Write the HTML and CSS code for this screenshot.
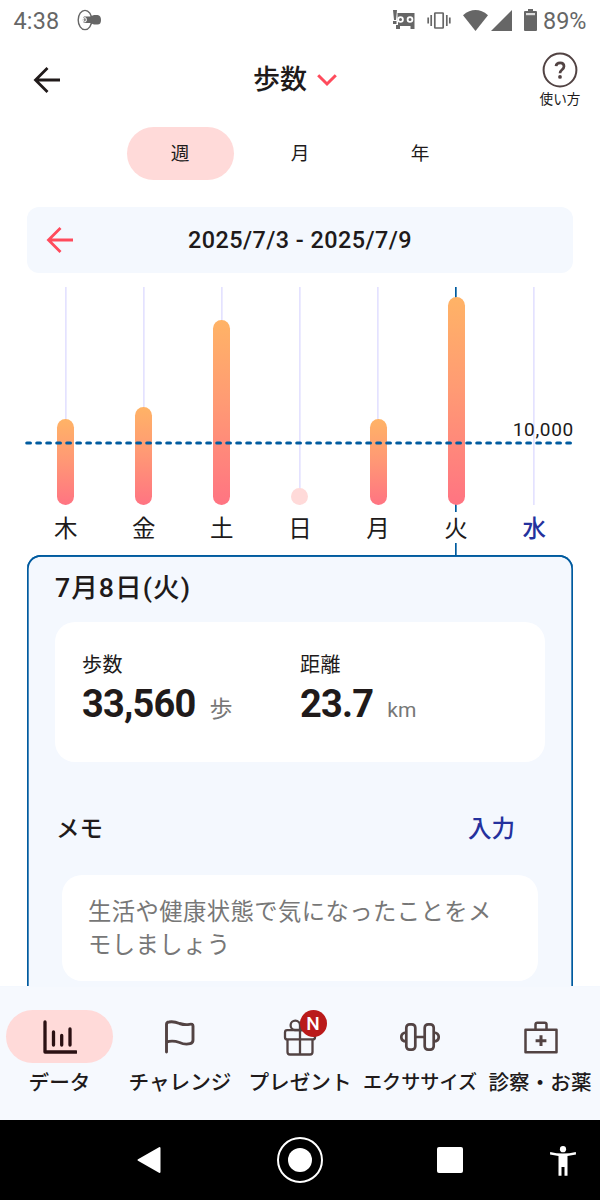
FILE: index.html
```html
<!DOCTYPE html>
<html lang="ja">
<head>
<meta charset="utf-8">
<title>歩数</title>
<link rel="stylesheet" href="styles.css">
</head>
<body>
<div class="status">
  <span class="clock">4:38</span>
  <svg class="st-app" width="24" height="22" viewBox="0 0 24 22"><ellipse cx="8" cy="11" rx="6.8" ry="9.6" fill="none" stroke="#666" stroke-width="1.4"/><path d="M7 7.5H13L17 6H20.5Q24 6.5 24 11T20.5 15.5H17L13 14H7Q4.5 11 7 7.5Z" fill="#666"/><ellipse cx="7.8" cy="10.8" rx="1.6" ry="2.2" fill="#888" stroke="#fff" stroke-width="1"/></svg>
  <div class="st-right">
    <svg class="st-robot" width="22" height="20" viewBox="0 0 22 20"><path fill="#666" d="M0 0H4L3 10H1ZM0 11H3.5V14H0ZM4.5 3H21.5V19H17.5V16H7V19H3V15H5V11H4.5Z"/><circle cx="7.5" cy="9.5" r="2.4" fill="#666" stroke="#fff" stroke-width="1.8"/><circle cx="17" cy="9.5" r="2.4" fill="#666" stroke="#fff" stroke-width="1.8"/></svg>
    <svg class="st-vib" width="24" height="17" viewBox="0 0 24 17"><g fill="none" stroke="#666" stroke-width="1.7"><rect x="7.8" y="1" width="8.4" height="15" rx=".5"/><path d="M4.2 3V14M1.2 5.5V11.5M19.8 3V14M22.8 5.5V11.5"/></g></svg>
    <svg class="st-wifi" width="25" height="21" viewBox="0 0 25 21"><path fill="#666" d="M0 5.2Q12.5-5 25 5.2L12.5 21Z"/></svg>
    <svg class="st-sig" width="21" height="21" viewBox="0 0 21 21"><path fill="#666" d="M21 0V21H0Z"/></svg>
    <svg class="st-bat" width="13" height="22" viewBox="0 0 13 22"><path fill="#666" d="M4 0H9V2H12Q13 2 13 3V21Q13 22 12 22H1Q0 22 0 21V3Q0 2 1 2H4Z"/><path fill="#ddd" d="M2 4H11V6.2H2Z"/></svg>
    <span class="pct">89%</span>
  </div>
</div>

<header class="header">
  <svg class="back" width="28" height="28" viewBox="0 0 28 28"><path d="M27 14H2.5M14.5 2L2.5 14L14.5 26" fill="none" stroke="#201a1a" stroke-width="2.8"/></svg>
  <div class="title"><span class="title-text">歩数</span><svg width="20" height="13" viewBox="0 0 20 13"><path d="M1.2 1.2L10 10L18.8 1.2" fill="none" stroke="#ff4b5c" stroke-width="3"/></svg></div>
  <div class="help">
    <svg width="36" height="36" viewBox="0 0 36 36"><circle cx="18" cy="18" r="16.4" fill="none" stroke="#524343" stroke-width="2"/><path d="M14 14.2Q14.3 10.8 18.2 10.8Q22 10.8 22 14.2Q22 16 20 17.7Q18 19.3 18 21.3" fill="none" stroke="#524343" stroke-width="2.7"/><circle cx="18" cy="24.9" r="1.9" fill="#524343"/></svg>
    <span class="help-label">使い方</span>
  </div>
</header>

<nav class="tabs"><span class="tab tab-on">週</span><span class="tab">月</span><span class="tab">年</span></nav>

<div class="range">
  <svg class="prev" width="28" height="28" viewBox="0 0 28 28"><path d="M27 14H2.5M14.5 2L2.5 14L14.5 26" fill="none" stroke="#ff4b5c" stroke-width="2.8"/></svg>
  <span class="dates">2025/7/3 - 2025/7/9</span>
</div>

<section class="chart">
  <div class="day"><div class="track"><i class="bar" style="height:86px"></i></div><span class="dow">木</span></div>
  <div class="day"><div class="track"><i class="bar" style="height:98px"></i></div><span class="dow">金</span></div>
  <div class="day"><div class="track"><i class="bar" style="height:185px"></i></div><span class="dow">土</span></div>
  <div class="day"><div class="track"><i class="bar bar-empty" style="height:17px"></i></div><span class="dow">日</span></div>
  <div class="day"><div class="track"><i class="bar" style="height:86px"></i></div><span class="dow">月</span></div>
  <div class="day day-on"><div class="track"><i class="bar" style="height:208px"></i></div><span class="dow">火</span><i class="stem"></i></div>
  <div class="day"><div class="track"><i class="bar" style="height:0"></i></div><span class="dow today">水</span></div>
  <svg class="goal-line" width="550" height="4" viewBox="0 0 550 4"><path d="M1.8 2H548" stroke="#005b9f" stroke-width="3.2" stroke-linecap="round" stroke-dasharray="3.6 6.4"/></svg>
  <span class="goal">10,000</span>
</section>

<main class="panel">
  <h2 class="date">7月8日(火)</h2>
  <div class="card">
    <div class="stat"><div class="name">歩数</div><div class="value"><b class="num">33,560</b><span class="unit">歩</span></div></div>
    <div class="stat"><div class="name">距離</div><div class="value"><b class="num">23.7</b><span class="unit unit-km">km</span></div></div>
  </div>
  <div class="memo-head"><span class="memo-title">メモ</span><span class="memo-edit">入力</span></div>
  <div class="memo">生活や健康状態で気になったことをメモしましょう</div>
</main>

<nav class="bottom">
  <div class="item item-on"><div class="pill"><svg width="34" height="34" viewBox="0 0 34 34"><path d="M2 2V32H33M10.5 12V25M18.7 15.5V25M27 9V25" fill="none" stroke="#2b1013" stroke-width="3.3" stroke-linecap="round" stroke-linejoin="round"/></svg></div><span class="label">データ</span></div>
  <div class="item"><div class="pill"><svg width="34" height="34" viewBox="0 0 34 34"><path d="M3.5 32V4.5Q3.5 2.2 6 2Q11 1.2 16.5 3.5Q22 5.3 26.5 4.3Q30 3.5 30 6V20Q30 23 27 23.7Q22 25 16.5 22.5Q9.5 20 3.5 22" fill="none" stroke="#524343" stroke-width="2.9" stroke-linecap="round" stroke-linejoin="round"/></svg></div><span class="label">チャレンジ</span></div>
  <div class="item"><div class="pill"><svg width="36" height="38" viewBox="0 0 36 38"><g fill="none" stroke="#524343" stroke-width="2.3" stroke-linejoin="round"><rect x="3" y="12.2" width="30" height="9.2" rx="2.2"/><path d="M5.5 21.4V34Q5.5 36.5 8 36.5H28Q30.5 36.5 30.5 34V21.4M18 12V36.5M18 12H12.8A4.7 4.7 0 1 1 18 7.3V12ZM18 12H23.2A4.7 4.7 0 1 0 18 7.3"/></g></svg><span class="badge">N</span></div><span class="label">プレゼント</span></div>
  <div class="item"><div class="pill"><svg width="40" height="30" viewBox="0 0 40 30"><g fill="none" stroke="#524343" stroke-width="2.7"><rect x="6.3" y="2.3" width="9" height="25.4" rx="3.4"/><rect x="24.7" y="2.3" width="9" height="25.4" rx="3.4"/><path d="M15.3 15H24.7M6.3 10.5Q1.3 11 1.3 15T6.3 19.5M33.7 10.5Q38.7 11 38.7 15T33.7 19.5"/></g></svg></div><span class="label label-narrow">エクササイズ</span></div>
  <div class="item"><div class="pill pill-kit"><svg width="34" height="34" viewBox="0 0 34 34"><g fill="none" stroke="#524343" stroke-width="2.5" stroke-linejoin="round"><path d="M1.5 9.7H32.5V32.3H1.5ZM11.5 9.5V4.5Q11.5 2.7 13.3 2.7H20.7Q22.5 2.7 22.5 4.5V9.5"/><path d="M17 15.3V26.1M11.6 20.7H22.4" stroke-width="3"/></g></svg></div><span class="label">診察・お薬</span></div>
</nav>

<footer class="sys">
  <svg class="sys-back" width="24" height="28" viewBox="0 0 24 28"><path d="M1.5 14L22.5 2V26Z" fill="#fff" stroke="#fff" stroke-width="2" stroke-linejoin="round"/></svg>
  <svg class="sys-home" width="48" height="48" viewBox="0 0 48 48"><circle cx="24" cy="24" r="22" fill="none" stroke="#fff" stroke-width="2"/><circle cx="24" cy="24" r="12" fill="#fff"/></svg>
  <svg class="sys-recent" width="26" height="26" viewBox="0 0 26 26"><rect width="26" height="26" rx="2" fill="#fff"/></svg>
  <svg class="sys-acc" width="26" height="30" viewBox="0 0 26 30"><circle cx="13" cy="3.2" r="3.1" fill="#fff"/><path d="M.2 6Q13 9 25.8 6L26 8.6L17.5 10V29.7H14.5V21H11.5V29.7H8.5V10L0 8.6Z" fill="#fff"/></svg>
</footer>
</body>
</html>
```

FILE: styles.css
```css
* { box-sizing: border-box; }
body {
  margin: 0;
  width: 600px;
  height: 1200px;
  overflow: hidden;
  display: flex;
  flex-direction: column;
  background: #fff;
  color: #201a1a;
  font-family: Roboto, "Noto Sans CJK JP", sans-serif;
}
svg { display: block; flex: none; }

.status { height: 40px; display: flex; align-items: center; padding: 0 13.5px 0 13.5px; color: #666; font-size: 23.4px; }
.clock, .pct { line-height: 40px; padding-top: 2px; }
.clock { letter-spacing: .2px; }
.st-app { margin-left: 18px; }
.st-right { margin-left: auto; display: flex; align-items: center; }
.st-vib { margin-left: 12px; }
.st-wifi { margin-left: 12px; }
.st-sig { margin-left: 3px; }
.st-bat { margin-left: 12px; }
.pct { margin-left: 6px; }

.header { height: 87px; display: grid; grid-template-columns: 120px 1fr 120px; }
.back { margin: 26px 0 0 33px; }
.title { display: flex; justify-content: center; align-items: center; height: 78px; gap: 10px; margin-left: -10px; font-size: 27px; font-weight: 500; }
.title-text { padding-bottom: 3px; }
.title svg { margin-top: 3px; }
.help { display: flex; flex-direction: column; align-items: center; padding: 12px 0 0 40px; }
.help-label { font-size: 13.6px; line-height: 20px; padding-top: 1px; }

.tabs { display: flex; justify-content: center; height: 53px; gap: 13px; }
.tab { width: 107px; height: 53px; border-radius: 27px; text-align: center; font-size: 18.7px; line-height: 55px; }
.tab-on { background: #ffdad9; }

.range { height: 66px; margin: 27px 27px 0; border-radius: 12px; background: #f4f8fe; display: grid; grid-template-columns: 60px 1fr 60px; align-items: center; }
.prev { margin-left: 19px; }
.dates { text-align: center; font-size: 23.4px; font-weight: 500; letter-spacing: .45px; }

.chart { position: relative; height: 282px; padding: 14px 0 0 26.6px; display: flex; }
.day { width: 78.1px; flex: none; display: flex; flex-direction: column; align-items: center; }
.track { width: 17px; height: 218px; display: flex; align-items: flex-end; background: linear-gradient(#e4e2ff, #e4e2ff) center / 1.7px 100% no-repeat; }
.bar { width: 17px; border-radius: 9px; background: linear-gradient(#ffb366, #ff9a74 45%, #ff7482); }
.bar-empty { background: #ffdad9; }
.day-on .track { height: 225px; padding-bottom: 7px; background-image: linear-gradient(#005b9f, #005b9f); }
.dow { font-size: 23.5px; line-height: 30px; margin-top: 9px; }
.day-on .dow { margin-top: 2px; }
.today { color: #24319d; font-weight: 500; }
.stem { width: 17px; flex: 1; margin-top: -1px; background: linear-gradient(#005b9f, #005b9f) center / 1.7px 100% no-repeat; }
.goal-line { position: absolute; left: 25px; top: 168px; }
.goal { position: absolute; right: 26px; top: 145px; font-size: 19px; line-height: 24px; letter-spacing: .7px; }

.panel { height: 432px; margin: 0 27px; padding: 2px 29px 0; box-shadow: inset 0 1.7px #005b9f, inset 0 0 0 1.7px #005b9f; border-radius: 14px 14px 0 0; background: #f4f8fe; overflow: hidden; }
.date { margin: 0 0 0 -1px; padding-top: 13px; height: 65px; font-size: 26.7px; line-height: 36px; font-weight: 500; letter-spacing: 1px; }
.card { height: 140px; margin: 0 -1px; padding: 28px 0 0 27px; border-radius: 20px; background: #fff; display: flex; }
.stat { width: 218px; }
.name { font-size: 20px; line-height: 30px; letter-spacing: .4px; }
.value { display: flex; align-items: baseline; line-height: 48px; }
.num { font-size: 38px; font-weight: 700; letter-spacing: -.8px; }
.unit { margin-left: 14px; font-size: 23px; font-weight: 400; color: #777; }
.unit-km { font-size: 21px; letter-spacing: 0; }
.memo-head { height: 113px; display: flex; justify-content: space-between; padding: 49px 29px 0 0; font-size: 23.5px; line-height: 36px; font-weight: 500; }
.memo-edit { color: #24319d; }
.memo { height: 106px; margin: 0 6px; padding: 21px 26px 0; border-radius: 20px; background: #fff; color: #777; font-size: 23.3px; line-height: 33px; letter-spacing: .45px; }

.bottom { height: 134px; margin-top: -1px; border-top: 1px solid #f4f8fe; position: relative; display: flex; background: #f6f9fe; padding-top: 23px; }
.item { width: 120px; display: flex; flex-direction: column; align-items: center; }
.pill { position: relative; width: 107px; height: 53px; border-radius: 27px; display: flex; align-items: center; justify-content: center; }
.item-on .pill { background: #ffdad9; }
.item-on { padding-right: 1px; }
.pill-kit { padding-left: 2px; }
.label { font-size: 20.6px; line-height: 30px; margin-top: 5px; font-weight: 500; white-space: nowrap; }
.label-narrow { font-size: 19.1px; }
.badge { position: absolute; left: 53px; top: 0; width: 27px; height: 27px; border-radius: 50%; background: #ba1a1a; color: #fff; font-size: 19px; font-weight: 500; line-height: 28px; text-align: center; }

.panel { height: 433px; margin-bottom: -1px; }

.sys { height: 80px; background: #000; display: grid; grid-template-columns: 75px 150px 150px 150px 75px; align-items: center; justify-items: center; }
.sys-back { grid-column: 2; margin-right: 3px; }
.sys-acc { margin-top: 1px; }
```
